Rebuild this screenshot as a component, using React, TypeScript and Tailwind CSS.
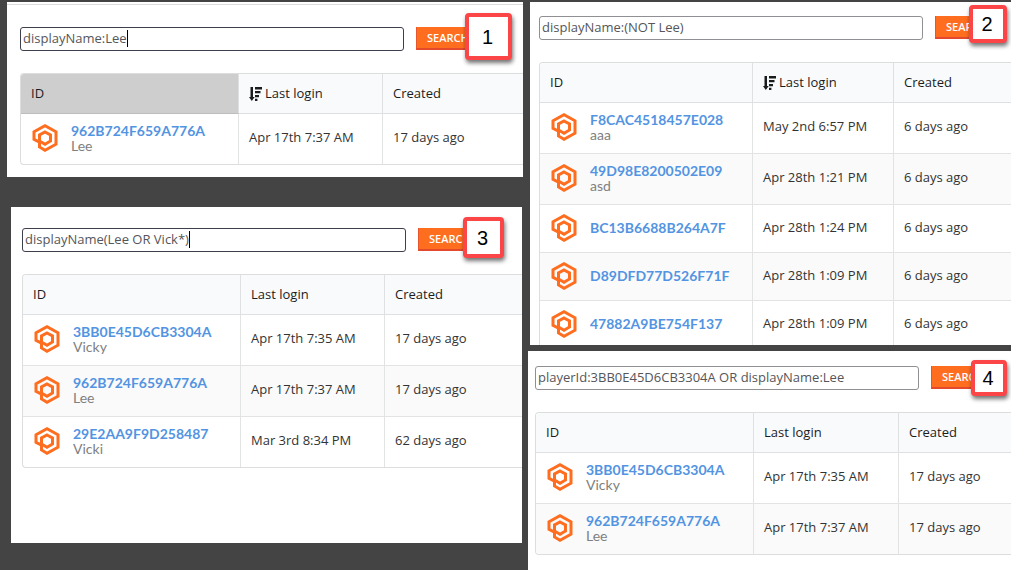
import React from "react";

type Player = { id: string; name?: string; login: string; created: string };

type PanelProps = {
  label: string;
  query: string;
  focused?: boolean;
  sorted?: boolean;
  idActive?: boolean;
  className: string;
  badgeClass: string;
  idCol: string;
  loginCol: string;
  players: Player[];
};

function PlayerLogo() {
  return (
    <svg width="26" height="28" viewBox="0 0 26 28" fill="none" stroke="#ff6d1f" strokeWidth="3" className="shrink-0" aria-hidden="true">
      <path d="M2 7.8 L13 1.8 L24 7.8 V20.2 L13 26.2 L7.5 23 V18.2 L2 15.4 Z" />
      <path d="M13 8 L18.5 11 V17 L13 20.2 L7.5 17 V11 Z" />
    </svg>
  );
}

function SortIcon() {
  return (
    <svg width="13" height="14" viewBox="0 0 13 14" fill="#1b1c1d" className="mr-[3px] shrink-0" aria-hidden="true">
      <path d="M1.5 0h2.5v10h1.7L2.8 14 0 10h1.5z" />
      <path d="M6 0h7v2.4H6zM6 4h5.5v2.2H6zM6 8h4v2.2H6zM6 11.8h2.4V14H6z" />
    </svg>
  );
}

function Panel({ label, query, focused, sorted, idActive, className, badgeClass, idCol, loginCol, players }: PanelProps) {
  return (
    <section className={"overflow-hidden bg-white " + className}>
      <form className="relative flex items-start gap-3" onSubmit={(e) => e.preventDefault()}>
        <label
          className={
            "flex h-6 w-96 shrink-0 items-center rounded-[3px] border bg-white px-[2px] pb-[2px] " +
            (focused ? "border-[#3c3f4c]" : "border-[#8f8f94]")
          }
        >
          <input
            type="text"
            aria-label={"Search players " + label}
            defaultValue={query}
            className={
              "h-5 bg-transparent text-[13px] text-[#55565a] outline-none " +
              (focused ? "field-sizing-content" : "w-full")
            }
          />
          {focused && <span className="h-[17px] w-px bg-black" />}
        </label>
        <button
          type="submit"
          className="h-[23px] shrink-0 border-b-2 border-l border-b-[#e5492d] border-l-[#e5572d] bg-[#ff6d1f] px-[10px] pt-px text-[11px] font-semibold text-white"
        >
          SEARCH
        </button>
        <span
          className={
            "absolute flex items-center justify-center rounded-[4px] border-4 border-[#fb4547] bg-white pr-[2px] font-['Liberation_Sans',sans-serif] text-[20px] text-black shadow-[1px_3px_4px_rgba(0,0,0,0.55)] " +
            badgeClass
          }
        >
          {label}
        </span>
      </form>
      <div className="mt-[22px] overflow-hidden rounded-l-[4px] border-y border-l border-[#dcdddd]">
        <table className="w-full table-fixed border-separate border-spacing-0 text-left text-[13px] text-[#333]">
          <thead>
            <tr className="h-10 bg-[#f9fafb] text-[#1b1c1d]">
              <th className={"border-r border-b border-[#dfe0e1] px-[10px] font-medium " + idCol + (idActive ? " border-b-[#bdbdbd] bg-[#cecece]" : "")}>ID</th>
              <th className={"border-r border-b border-[#dfe0e1] px-[10px] font-medium " + loginCol}>
                <span className="flex items-center">
                  {sorted && <SortIcon />}
                  Last login
                </span>
              </th>
              <th className="border-b border-[#dfe0e1] px-[10px] font-medium">Created</th>
            </tr>
          </thead>
          <tbody className="[&>tr:last-child>td]:border-b-0">
            {players.map((p) => (
              <tr key={p.id} className={(p.name ? "h-[51px] last:h-[50px]" : "h-12") + " even:bg-[#fafafa]"}>
                <td className="border-r border-b border-[#e2e3e3] pb-[2px] pl-[11px]">
                  <span className="flex items-center gap-[13px]">
                    <PlayerLogo />
                    <span className="flex flex-col font-['Lato',sans-serif] text-[14px]">
                      <a href={"#" + p.id} className="leading-4 font-bold text-[#5294e2]">
                        {p.id}
                      </a>
                      {p.name && <span className="leading-[14px] text-[#808080]">{p.name}</span>}
                    </span>
                  </span>
                </td>
                <td className="border-r border-b border-[#e2e3e3] px-[10px] pb-[2px]">{p.login}</td>
                <td className="border-b border-[#e2e3e3] px-[10px] pb-[2px]">{p.created}</td>
              </tr>
            ))}
          </tbody>
        </table>
      </div>
    </section>
  );
}

const lee: Player = { id: "962B724F659A776A", name: "Lee", login: "Apr 17th 7:37 AM", created: "17 days ago" };
const vicky: Player = { id: "3BB0E45D6CB3304A", name: "Vicky", login: "Apr 17th 7:35 AM", created: "17 days ago" };
const vicki: Player = { id: "29E2AA9F9D258487", name: "Vicki", login: "Mar 3rd 8:34 PM", created: "62 days ago" };

const notLee: Player[] = [
  { id: "F8CAC4518457E028", name: "aaa", login: "May 2nd 6:57 PM", created: "6 days ago" },
  { id: "49D98E8200502E09", name: "asd", login: "Apr 28th 1:21 PM", created: "6 days ago" },
  { id: "BC13B6688B264A7F", login: "Apr 28th 1:24 PM", created: "6 days ago" },
  { id: "D89DFD77D526F71F", login: "Apr 28th 1:09 PM", created: "6 days ago" },
  { id: "47882A9BE754F137", login: "Apr 28th 1:09 PM", created: "6 days ago" },
];

export default function App() {
  return (
    <main className="grid min-h-screen grid-cols-[528fr_483fr] bg-[#444] font-['Open_Sans',sans-serif]">
      <div className="flex min-w-0 flex-col gap-[30px] pt-[2px]">
        <Panel
          label="1"
          query="displayName:Lee"
          focused
          sorted
          idActive
          className="mr-[5px] ml-[7px] bg-[linear-gradient(#dcdcdc,#dcdcdc)] bg-[length:100%_1px] bg-[position:0_2px] bg-no-repeat pt-[25px] pb-3 pl-[13px]"
          badgeClass="-top-[14px] left-[445px] size-[47px]"
          idCol="w-[218px]"
          loginCol="w-36"
          players={[lee]}
        />
        <Panel
          label="3"
          query="displayName(Lee OR Vick*)"
          focused
          className="mr-[6px] ml-[11px] pt-[21px] pb-[75px] pl-[11px]"
          badgeClass="-top-[11px] left-[441px] size-[41px]"
          idCol="w-[218px]"
          loginCol="w-36"
          players={[vicky, lee, vicki]}
        />
      </div>
      <div className="flex min-w-0 flex-col gap-[6px] pt-[2px]">
        <Panel
          label="2"
          query="displayName:(NOT Lee)"
          sorted
          className="ml-[2px] max-h-[343px] pt-[14px] pl-[9px]"
          badgeClass="-top-[11px] left-[430px] size-[38px]"
          idCol="w-[213px]"
          loginCol="w-[141px]"
          players={notLee}
        />
        <Panel
          label="4"
          query="playerId:3BB0E45D6CB3304A OR displayName:Lee"
          className="flex-1 pt-[15px] pb-4 pl-[7px]"
          badgeClass="-top-[6px] left-[436px] size-9"
          idCol="w-[218px]"
          loginCol="w-[145px]"
          players={[vicky, lee]}
        />
      </div>
    </main>
  );
}
